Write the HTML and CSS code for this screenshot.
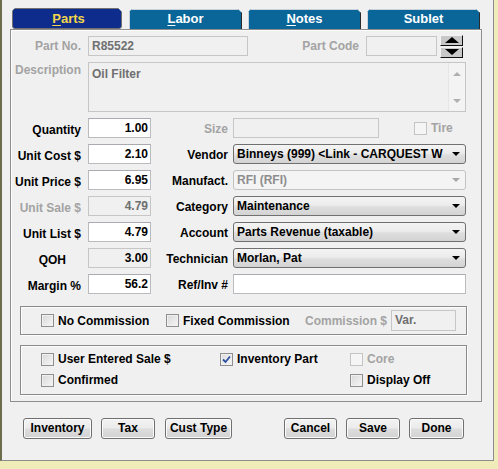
FILE: index.html
```html
<!DOCTYPE html>
<html>
<head>
<meta charset="utf-8">
<link rel="stylesheet" href="styles.css">
</head>
<body>
<div class="win">
  <div class="tabs">
    <div class="tab sel"><span class="ul">P</span>arts</div>
    <div class="tab"><span class="ul">L</span>abor</div>
    <div class="tab"><span class="ul">N</span>otes</div>
    <div class="tab">Sublet</div>
  </div>
  <div class="panel">
    <div class="row1">
      <div class="lbl dis l70">Part No.</div>
      <div class="field ro pn">R85522</div>
      <div class="lbl dis pc">Part Code</div>
      <div class="field ro pcf"></div>
      <div class="spin">
        <div class="sb"><span class="tri up"></span></div>
        <div class="sb"><span class="tri dn"></span></div>
      </div>
    </div>
    <div class="row2">
      <div class="lbl dis l70 top">Description</div>
      <div class="memo">
        <div class="memo-text">Oil Filter</div>
        <div class="vscroll"><span class="sa up"></span><span class="sa dn"></span></div>
      </div>
    </div>
    <div class="grid">
      <div class="glbl">Quantity</div>
      <div class="field num">1.00</div>
      <div class="glbl r dis">Size</div>
      <div class="sizecell"><div class="field ro size"></div><span class="cb dis"></span><span class="dis tire">Tire</span></div>

      <div class="glbl">Unit Cost $</div>
      <div class="field num">2.10</div>
      <div class="glbl r">Vendor</div>
      <div class="sel">Binneys (999) &lt;Link - CARQUEST W<span class="arr"></span></div>

      <div class="glbl">Unit Price $</div>
      <div class="field num">6.95</div>
      <div class="glbl r">Manufact.</div>
      <div class="sel off">RFI (RFI)<span class="arr"></span></div>

      <div class="glbl dis">Unit Sale $</div>
      <div class="field num ro dimtext">4.79</div>
      <div class="glbl r">Category</div>
      <div class="sel">Maintenance<span class="arr"></span></div>

      <div class="glbl">Unit List $</div>
      <div class="field num">4.79</div>
      <div class="glbl r">Account</div>
      <div class="sel">Parts Revenue (taxable)<span class="arr"></span></div>

      <div class="glbl qoh">QOH</div>
      <div class="field num ro">3.00</div>
      <div class="glbl r">Technician</div>
      <div class="sel">Morlan, Pat<span class="arr"></span></div>

      <div class="glbl">Margin %</div>
      <div class="field num">56.2</div>
      <div class="glbl r">Ref/Inv #</div>
      <div class="field"></div>
    </div>
    <div class="group g1">
      <div class="chk w125"><span class="cb"></span>No Commission</div>
      <div class="chk"><span class="cb"></span>Fixed Commission</div>
      <div class="dis comlbl">Commission $</div>
      <div class="field ro com dimtext">Var.</div>
    </div>
    <div class="group g2">
      <div class="chk"><span class="cb"></span>User Entered Sale $</div>
      <div class="chk"><span class="cb on"><svg width="9" height="9" viewBox="0 0 9 9"><path d="M1 4.5 L3.5 7 L8 1.5" fill="none" stroke="#2b4f9e" stroke-width="1.8"/></svg></span>Inventory Part</div>
      <div class="chk dis"><span class="cb dis"></span>Core</div>
      <div class="chk"><span class="cb"></span>Confirmed</div>
      <div></div>
      <div class="chk"><span class="cb"></span>Display Off</div>
    </div>
  </div>
  <div class="buttons">
    <div class="btn b-inv">Inventory</div>
    <div class="btn b-tax">Tax</div>
    <div class="btn b-cust">Cust Type</div>
    <div class="btn b-cancel">Cancel</div>
    <div class="btn b-save">Save</div>
    <div class="btn b-done">Done</div>
  </div>
</div>
</body>
</html>
```

FILE: styles.css
```css
* { box-sizing: border-box; }
body {
  margin: 0;
  background: #efecb9;
  font: bold 12px "Liberation Sans", Arial, sans-serif;
  color: #000;
}
.win {
  width: 494px;
  height: 461px;
  background: #f0f0f0;
  border-left: 2px solid #6d6d4e;
  border-right: 1px solid #8c8c8c;
  border-bottom: 1px solid #8c8c8c;
  box-shadow: 0 6px 0 #efecb9, 0 7px 0 #a2a294;
  display: flex;
  flex-direction: column;
}
.tabs {
  display: flex;
  align-items: flex-end;
  gap: 6px;
  height: 21px;
  margin: 8px 0 0 10px;
}
.tab {
  width: 113px;
  height: 20px;
  background: #0a6698;
  color: #fff;
  font-size: 13px;
  line-height: 18px;
  text-align: center;
  border-top: 1px solid #c9d2da;
  border-left: 1px solid #c9d2da;
  border-right: 1px solid #2a2a2a;
  clip-path: polygon(3px 0, calc(100% - 4px) 0, 100% 4px, 100% 100%, 0 100%, 0 3px);
}
.tab.sel {
  width: 110px;
  height: 21px;
  line-height: 19px;
  margin-right: 1px;
  background: #0e2c8c;
  color: #f4d64a;
}
.ul { text-decoration: underline; text-underline-offset: 2px; }

.panel {
  margin-left: 8px;
  width: 472px;
  height: 373px;
  border: 1px solid #8e8e8e;
  box-shadow: inset 1px 1px 0 #fcfcfc;
  padding-top: 6px;
}
.dis { color: #a3a3a3; }
.lbl { line-height: 20px; white-space: nowrap; }
.l70 { width: 70px; text-align: right; }
.top { line-height: 16px; }
.pc { width: 111px; text-align: right; }

.field {
  height: 20px;
  background: #fff;
  border: 1px solid #b9bbbf;
  border-top-color: #a9abb0;
  line-height: 18px;
  padding: 0 3px;
  white-space: nowrap;
  overflow: hidden;
}
.field.ro { background: #f0f0f0; border-color: #c6c6c6; }
.dimtext { color: #6f6f6f; }
.num { text-align: right; padding-right: 2px; }

.row1 {
  display: flex;
  align-items: center;
  height: 20px;
}
.pn { margin-left: 7px; width: 160px; color: #6f6f6f; }
.pcf { margin-left: 7px; width: 71px; }
.spin {
  margin-left: 3px;
  width: 23px;
  display: flex;
  flex-direction: column;
  gap: 1px;
}
.sb {
  height: 11px;
  background: #c8c8c8;
  border-top: 1px solid #f4f4f4;
  border-left: 1px solid #f4f4f4;
  border-right: 1px solid #101010;
  border-bottom: 1px solid #101010;
  display: flex;
  align-items: center;
  justify-content: center;
}
.tri { width: 0; height: 0; border-left: 7px solid transparent; border-right: 7px solid transparent; }
.tri.up { border-bottom: 6px solid #000; }
.tri.dn { border-top: 6px solid #000; }

.row2 {
  display: flex;
  align-items: flex-start;
  margin-top: 6px;
}
.memo {
  margin-left: 7px;
  width: 378px;
  height: 50px;
  border: 1px solid #c6c6c6;
  background: #f0f0f0;
  display: flex;
}
.memo-text {
  flex: 1;
  padding: 3px 3px 0;
  line-height: 16px;
  color: #6f6f6f;
}
.vscroll {
  width: 17px;
  background: #f3f3f3;
  border-left: 1px solid #e6e6e6;
  display: flex;
  flex-direction: column;
  justify-content: space-between;
  align-items: center;
  padding: 9px 0 8px;
}
.sa { width: 0; height: 0; border-left: 4px solid transparent; border-right: 4px solid transparent; }
.sa.up { border-bottom: 4px solid #b0b0b0; }
.sa.dn { border-top: 4px solid #b0b0b0; }

.grid {
  display: grid;
  grid-template-columns: 77px 63px 82px 233px;
  grid-auto-rows: 20px;
  row-gap: 6px;
  margin-top: 6px;
}
.glbl {
  text-align: right;
  padding-right: 7px;
  padding-top: 2px;
  line-height: 20px;
  white-space: nowrap;
}
.glbl.r { padding-right: 5px; padding-top: 1px; }
.glbl.qoh { padding-right: 22px; }
.sizecell { display: flex; align-items: center; }
.size { width: 146px; }
.sizecell .cb { margin-left: 35px; }
.tire { margin-left: 4px; }

.sel {
  position: relative;
  height: 20px;
  border: 1px solid #707070;
  border-radius: 3px;
  background: linear-gradient(#f4f4f4 0%, #ececec 45%, #dedede 55%, #d3d3d3 100%);
  line-height: 18px;
  padding-left: 3px;
  white-space: nowrap;
  overflow: hidden;
}
.sel.off {
  border-color: #c2c2c2;
  background: #f4f4f4;
  color: #8d8d8d;
}
.arr {
  position: absolute;
  right: 5px;
  top: 7px;
  width: 0;
  height: 0;
  border-left: 4px solid transparent;
  border-right: 4px solid transparent;
  border-top: 4px solid #000;
}
.sel.off .arr { border-top-color: #a8a8a8; }

.cb {
  display: inline-flex;
  align-items: center;
  justify-content: center;
  width: 13px;
  height: 13px;
  flex: none;
  border: 1px solid #8f8f8f;
  background: linear-gradient(135deg, #d8d8d8, #f6f6f6);
  box-shadow: inset 0 0 0 1px #f0f0f0;
}
.cb.dis { border-color: #c4c4c4; background: #f5f5f5; box-shadow: none; }
.cb.on { background: linear-gradient(135deg, #dcdcdc, #f8f8f8); }

.chk {
  display: flex;
  align-items: center;
  gap: 4px;
  white-space: nowrap;
  line-height: 16px;
}
.group {
  margin-left: 9px;
  width: 447px;
  border: 1px solid #8a8a8a;
  box-shadow: inset 1px 1px 0 #fdfdfd, 1px 1px 0 #fdfdfd;
}
.g1 {
  margin-top: 12px;
  height: 29px;
  display: flex;
  align-items: center;
  padding-left: 20px;
}
.w125 { width: 125px; }
.comlbl { margin-left: auto; }
.com { width: 65px; height: 21px; margin: 0 10px 0 4px; color: #6f6f6f; }
.g2 {
  margin-top: 10px;
  height: 50px;
  display: grid;
  grid-template-columns: 179px 130px auto;
  grid-auto-rows: 16px;
  row-gap: 5px;
  padding: 5px 0 0 20px;
}

.buttons {
  display: flex;
  margin-top: 16px;
  padding-left: 21px;
  height: 21px;
}
.btn {
  height: 21px;
  border: 1px solid #707070;
  border-radius: 3px;
  background: linear-gradient(#f3f3f3 0%, #ebebeb 48%, #dddddd 52%, #d2d2d2 100%);
  box-shadow: inset 0 0 0 1px #fbfbfb;
  text-align: center;
  line-height: 19px;
}
.b-inv { width: 69px; }
.b-tax { width: 54px; margin-left: 9px; }
.b-cust { width: 67px; margin-left: 10px; }
.b-cancel { width: 53px; margin-left: 52px; }
.b-save { width: 54px; margin-left: 9px; }
.b-done { width: 55px; margin-left: 9px; }
```
